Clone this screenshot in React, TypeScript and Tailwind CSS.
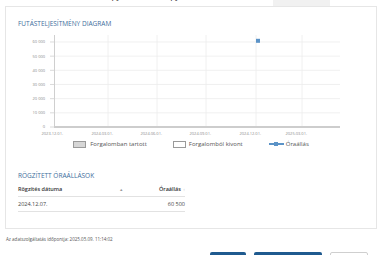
import React from "react";

const yTicks = ["0", "10 000", "20 000", "30 000", "40 000", "50 000", "60 000"];
const xTicks = [
  { x: 52, label: "2023.12.01." },
  { x: 102, label: "2024.03.01." },
  { x: 151, label: "2024.06.01." },
  { x: 200, label: "2024.09.01." },
  { x: 250, label: "2024.12.01." },
  { x: 296, label: "2025.03.01." },
];

function Chart() {
  // svg origin sits at the card's inner left edge
  const base = 95;
  const step = 14.17;
  return (
    <svg width={370} height={105} className="block">
      {yTicks.map((t, i) => {
        const y = base - step * i;
        return (
          <g key={t}>
            <line x1={49} x2={334} y1={y} y2={y} stroke="#ececec" strokeWidth={0.8} />
            <line x1={44} x2={48.5} y1={y} y2={y} stroke="#d0d0d0" strokeWidth={0.8} />
            <text x={39} y={y + 1.4} textAnchor="end" fontSize={4} fill="#8a8a8a">
              {t}
            </text>
          </g>
        );
      })}
      {xTicks.map((t) => (
        <g key={t.label}>
          {t.x > 60 && (
            <line x1={t.x} x2={t.x} y1={3} y2={base} stroke="#ececec" strokeWidth={0.8} />
          )}
          <text x={t.x + 5} y={102.5} textAnchor="end" fontSize={4} fill="#8a8a8a">
            {t.label}
          </text>
        </g>
      ))}
      <line x1={48.5} x2={48.5} y1={3} y2={base} stroke="#cfcfcf" strokeWidth={1} />
      <line x1={48} x2={334} y1={base} y2={base} stroke="#cdcdcd" strokeWidth={2} />
      <rect x={250} y={6.8} width={4} height={4} fill="#5b93c7" />
    </svg>
  );
}

export default function App() {
  return (
    <div className="w-[382px] h-[255px] overflow-hidden bg-white font-['Open_Sans',sans-serif]">
      {/* Top strip, cut off */}
      <div className="flex h-[6px] overflow-hidden">
        <div className="ml-[100px] -mt-[9px] text-[9px] leading-[10px] text-[#333]">
          Gépjármű adatlapja
        </div>
        <div className="ml-auto mr-[52px] w-[57px] bg-[#f1f1f1]" />
      </div>

      {/* Card */}
      <div className="mx-[5px] border border-[#e6e6e6] pt-[13px] pb-[16px]">
        <div className="pl-[12px] text-[6.5px] leading-[8px] text-[#3d6e9c] uppercase">
          Futásteljesítmény diagram
        </div>
        <div className="mt-[4px]">
          <Chart />
        </div>

        {/* Legend */}
        <div className="mt-[3px] flex h-[8px] items-center justify-center gap-[26px] text-[6px] text-[#555]">
          <div className="flex items-center gap-[4px]">
            <span className="h-[7px] w-[13px] border border-[#9a9a9a] bg-[#d6d6d6]" />
            <span>Forgalomban tartott</span>
          </div>
          <div className="flex items-center gap-[3px]">
            <span className="h-[7px] w-[13px] border border-[#9a9a9a] bg-white" />
            <span>Forgalomból kivont</span>
          </div>
          <div className="flex items-center gap-[2px]">
            <span className="relative flex h-[4px] w-[15px] items-center justify-center">
              <span className="h-[1.5px] w-full bg-[#5b93c7]" />
              <span className="absolute h-[4px] w-[4px] bg-[#5b93c7]" />
            </span>
            <span>Óraállás</span>
          </div>
        </div>

        {/* Recorded readings */}
        <div className="mt-[24px] pl-[12px] text-[6.5px] leading-[8px] text-[#3d6e9c] uppercase">
          Rögzített óraállások
        </div>
        <div className="mt-[3px] ml-[12px] w-[167px] text-[5.5px]">
          <div className="flex h-[14px] items-center border-b border-[#e2e2e2] font-semibold text-[#333]">
            <span>Rögzítés dátuma</span>
            <span className="ml-[57px] text-[4px] text-[#999]">▲</span>
            <span className="ml-auto">Óraállás</span>
            <span className="ml-[2px] text-[4px] font-normal text-[#bbb]">↕</span>
          </div>
          <div className="flex h-[15px] items-center border-b border-[#e2e2e2] text-[#444]">
            <span>2024.12.07.</span>
            <span className="ml-auto">60 500</span>
          </div>
        </div>
      </div>

      {/* Footer */}
      <div className="mt-[7px] pl-[6px] text-[4.5px] leading-[6px] text-[#555]">
        Az adatszolgáltatás időpontja: 2025.05.09. 11:14:02
      </div>

      {/* Buttons */}
      <div className="mt-[10px] flex">
        <button className="ml-[210px] h-[14px] w-[36px] rounded-[2px] bg-[#1f5a8f]" />
        <button className="ml-[8px] h-[14px] w-[68px] rounded-[2px] bg-[#1f5a8f]" />
        <button className="ml-[8px] h-[14px] w-[38px] rounded-[2px] border border-[#cfcfcf] bg-white" />
      </div>
    </div>
  );
}
